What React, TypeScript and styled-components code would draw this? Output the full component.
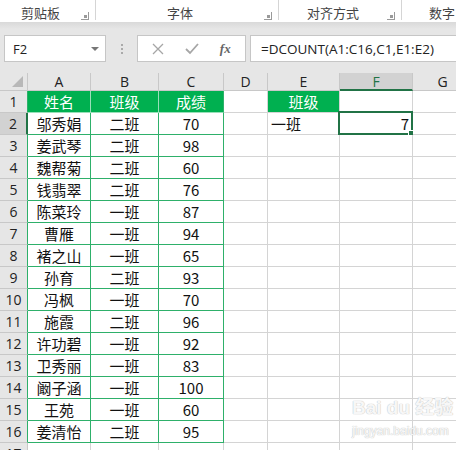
import styled, { createGlobalStyle } from "styled-components";

type Row = [string, string, string];

const data: Row[] = [
  ["邬秀娟", "二班", "70"],
  ["姜武琴", "二班", "98"],
  ["魏帮菊", "二班", "60"],
  ["钱翡翠", "二班", "76"],
  ["陈菜玲", "一班", "87"],
  ["曹雁", "一班", "94"],
  ["褚之山", "一班", "65"],
  ["孙育", "二班", "93"],
  ["冯枫", "一班", "70"],
  ["施霞", "二班", "96"],
  ["许功碧", "一班", "92"],
  ["卫秀丽", "一班", "83"],
  ["阚子涵", "一班", "100"],
  ["王苑", "一班", "60"],
  ["姜清怡", "二班", "95"],
];

const columns = ["A", "B", "C", "D", "E", "F", "G"];
const widths = [28, 63, 68, 65, 44, 72, 73, 60];

const GREEN = "#00b050";
const TABLE_LINE = "#2eb06a";
const GRID = "#d4d4d4";
const SEL = "#217346";

const GlobalStyle = createGlobalStyle`
  html, body { margin: 0; padding: 0; }
  body {
    width: 456px;
    height: 450px;
    overflow: hidden;
    background: #fff;
    font-family: "Noto Sans CJK SC", "Noto Sans", sans-serif;
  }
`;

const Page = styled.div`
  position: relative;
  width: 456px;
  height: 450px;
  overflow: hidden;
`;

const Ribbon = styled.div`
  display: flex;
  height: 22px;
  background: #fff;
  color: #444;
  font-size: 13px;
`;

const Group = styled.div<{ $w: number; $last?: boolean }>`
  display: flex;
  align-items: center;
  width: ${({ $w }) => $w}px;
  flex-shrink: 0;
  border-right: ${({ $last }) => ($last ? "none" : "1px solid #d5d5d5")};
  height: 20px;
`;

const GroupLabel = styled.span<{ $indent?: number }>`
  flex: ${({ $indent }) => ($indent ? "none" : 1)};
  padding-left: ${({ $indent }) => $indent ?? 0}px;
  text-align: center;
  line-height: 20px;
  padding-top: 6px;
`;

const Launcher = styled.span`
  width: 7px;
  height: 7px;
  margin: 12px 6px 0 0;
  border: 1px solid #9a9a9a;
  border-top: none;
  border-left: none;
  position: relative;
  &::after {
    content: "";
    position: absolute;
    right: 1px;
    bottom: 1px;
    width: 3px;
    height: 3px;
    background: #9a9a9a;
  }
`;

const FormulaArea = styled.div`
  display: flex;
  align-items: stretch;
  height: 27px;
  padding: 13px 0 11px 4px;
  background: linear-gradient(#d9d9d9 0, #e6e6e6 7px, #e6e6e6 100%);
`;

const NameBox = styled.div`
  box-sizing: border-box;
  width: 102px;
  display: flex;
  align-items: center;
  justify-content: space-between;
  padding: 0 6px 0 8px;
  background: #fff;
  border: 1px solid #c6c6c6;
  font-family: "Open Sans", "Noto Sans", sans-serif;
  font-size: 13px;
  color: #222;
`;

const Caret = styled.span`
  width: 0;
  height: 0;
  border-left: 4px solid transparent;
  border-right: 4px solid transparent;
  border-top: 4px solid #777;
`;

const Dots = styled.div`
  width: 31px;
  display: flex;
  flex-direction: column;
  align-items: center;
  justify-content: center;
  gap: 2px;
  span {
    width: 2px;
    height: 2px;
    background: #aaa;
  }
`;

const ButtonBox = styled.div`
  box-sizing: border-box;
  width: 109px;
  display: flex;
  align-items: center;
  justify-content: space-around;
  padding: 0 4px;
  background: #fff;
  border: 1px solid #c6c6c6;
  margin-right: 4px;
`;

const Fx = styled.span`
  font-family: "Liberation Serif", serif;
  font-style: italic;
  font-weight: bold;
  font-size: 13px;
  color: #666;
`;

const FormulaBox = styled.div`
  box-sizing: border-box;
  flex: 1;
  display: flex;
  align-items: center;
  padding-left: 10px;
  background: #fff;
  border: 1px solid #c6c6c6;
  border-right: none;
  font-family: "Open Sans", "Noto Sans", sans-serif;
  font-size: 13.5px;
  color: #222;
`;

const Sheet = styled.div`
  display: grid;
  grid-template-columns: ${widths.map((w) => `${w}px`).join(" ")};
  grid-template-rows: 18px;
  grid-auto-rows: 22px;
  font-size: 15px;
  color: #111;
`;

const ColHead = styled.div<{ $sel?: boolean }>`
  box-sizing: border-box;
  display: flex;
  align-items: center;
  justify-content: center;
  background: ${({ $sel }) => ($sel ? "#d2d2d2" : "#e6e6e6")};
  border-right: 1px solid #c8c8c8;
  border-bottom: ${({ $sel }) => ($sel ? `2px solid ${SEL}` : "1px solid #c8c8c8")};
  color: ${({ $sel }) => ($sel ? SEL : "#222")};
  font-family: "Open Sans", "Noto Sans", sans-serif;
  font-size: 14px;
`;

const Corner = styled.div`
  position: relative;
  background: #e6e6e6;
  border-right: 1px solid #c8c8c8;
  border-bottom: 1px solid #c8c8c8;
  &::after {
    content: "";
    position: absolute;
    right: 4px;
    bottom: 3px;
    border-left: 11px solid transparent;
    border-bottom: 11px solid #b8b8b8;
  }
`;

const RowHead = styled.div<{ $sel?: boolean; $edge?: string }>`
  box-sizing: border-box;
  display: flex;
  align-items: center;
  justify-content: center;
  background: ${({ $sel }) => ($sel ? "#d2d2d2" : "#e6e6e6")};
  border-bottom: 1px solid #c8c8c8;
  border-right: ${({ $sel, $edge }) =>
    $sel ? `2px solid ${SEL}` : `1px solid ${$edge ?? "#c8c8c8"}`};
  font-family: "Open Sans", "Noto Sans", sans-serif;
  font-size: 14px;
  color: #222;
`;

const Cell = styled.div<{
  $align?: "left" | "center" | "right";
  $fill?: boolean;
  $right?: string;
  $bottom?: string;
}>`
  box-sizing: border-box;
  position: relative;
  display: flex;
  align-items: center;
  justify-content: ${({ $align }) =>
    $align === "left" ? "flex-start" : $align === "right" ? "flex-end" : "center"};
  padding: 0 3px;
  background: ${({ $fill }) => ($fill ? GREEN : "#fff")};
  color: ${({ $fill }) => ($fill ? "#fff" : "#111")};
  border-right: 1px solid ${({ $right }) => $right ?? GRID};
  border-bottom: 1px solid ${({ $bottom }) => $bottom ?? GRID};
  white-space: nowrap;
`;

const Selection = styled.div`
  position: absolute;
  left: -2px;
  top: -2px;
  right: -1px;
  bottom: -1px;
  border: 2px solid ${SEL};
  pointer-events: none;
  &::after {
    content: "";
    position: absolute;
    right: -4px;
    bottom: -4px;
    width: 5px;
    height: 5px;
    background: ${SEL};
    border: 1px solid #fff;
  }
`;

const Watermark = styled.div`
  position: absolute;
  left: 352px;
  top: 398px;
  white-space: nowrap;
  color: rgba(255, 255, 255, 0.9);
  text-shadow: 0 0 1px #c4c4c4, 0 0 1px #c4c4c4;
  font-family: "Liberation Sans", "Noto Sans CJK SC", sans-serif;
  line-height: 1;
  pointer-events: none;
`;

const WatermarkLogo = styled.div`
  font-size: 19px;
  font-weight: bold;
`;

const WatermarkSite = styled.div`
  font-size: 12px;
  margin-top: 8px;
`;

const XIcon = () => (
  <svg width="12" height="12" viewBox="0 0 12 12">
    <path d="M1 1 L11 11 M11 1 L1 11" stroke="#a6a6a6" strokeWidth="1.3" fill="none" />
  </svg>
);

const CheckIcon = () => (
  <svg width="14" height="12" viewBox="0 0 14 12">
    <path d="M1 6 L5 10 L13 1" stroke="#a6a6a6" strokeWidth="1.8" fill="none" />
  </svg>
);

export default function App() {
  const tableRows = [["姓名", "班级", "成绩"] as Row, ...data];

  return (
    <Page>
      <GlobalStyle />
      <Ribbon>
        <Group $w={95}>
          <GroupLabel>剪贴板</GroupLabel>
          <Launcher />
        </Group>
        <Group $w={182}>
          <GroupLabel>字体</GroupLabel>
          <Launcher />
        </Group>
        <Group $w={122}>
          <GroupLabel>对齐方式</GroupLabel>
          <Launcher />
        </Group>
        <Group $w={80} $last>
          <GroupLabel $indent={27}>数字</GroupLabel>
        </Group>
      </Ribbon>

      <FormulaArea>
        <NameBox>
          F2
          <Caret />
        </NameBox>
        <Dots>
          <span />
          <span />
          <span />
        </Dots>
        <ButtonBox>
          <XIcon />
          <CheckIcon />
          <Fx>fx</Fx>
        </ButtonBox>
        <FormulaBox>=DCOUNT(A1:C16,C1,E1:E2)</FormulaBox>
      </FormulaArea>

      <Sheet>
        <Corner />
        {columns.map((c) => (
          <ColHead key={c} $sel={c === "F"}>
            {c}
          </ColHead>
        ))}

        {tableRows.map((r, i) => {
          const n = i + 1;
          const head = i === 0;
          const inner = head ? "rgba(255,255,255,0.6)" : TABLE_LINE;
          return [
            <RowHead key={`h${n}`} $sel={n === 2} $edge={TABLE_LINE}>
              {n}
            </RowHead>,
            <Cell key={`a${n}`} $fill={head} $right={inner} $bottom={inner}>
              {r[0]}
            </Cell>,
            <Cell key={`b${n}`} $fill={head} $right={inner} $bottom={inner}>
              {r[1]}
            </Cell>,
            <Cell key={`c${n}`} $fill={head} $right={TABLE_LINE} $bottom={inner}>
              {r[2]}
            </Cell>,
            <Cell key={`d${n}`} />,
            <Cell key={`e${n}`} $fill={n === 1} $align={n === 2 ? "left" : "center"}>
              {n === 1 ? "班级" : n === 2 ? "一班" : ""}
            </Cell>,
            <Cell key={`f${n}`} $align="right">
              {n === 2 && "7"}
              {n === 2 && <Selection />}
            </Cell>,
            <Cell key={`g${n}`} />,
          ];
        })}

        <RowHead>17</RowHead>
        {widths.slice(1).map((_, i) => (
          <Cell key={`r17${i}`} />
        ))}
      </Sheet>

      <Watermark>
        <WatermarkLogo>Bai du 经验</WatermarkLogo>
        <WatermarkSite>jingyan.baidu.com</WatermarkSite>
      </Watermark>
    </Page>
  );
}
